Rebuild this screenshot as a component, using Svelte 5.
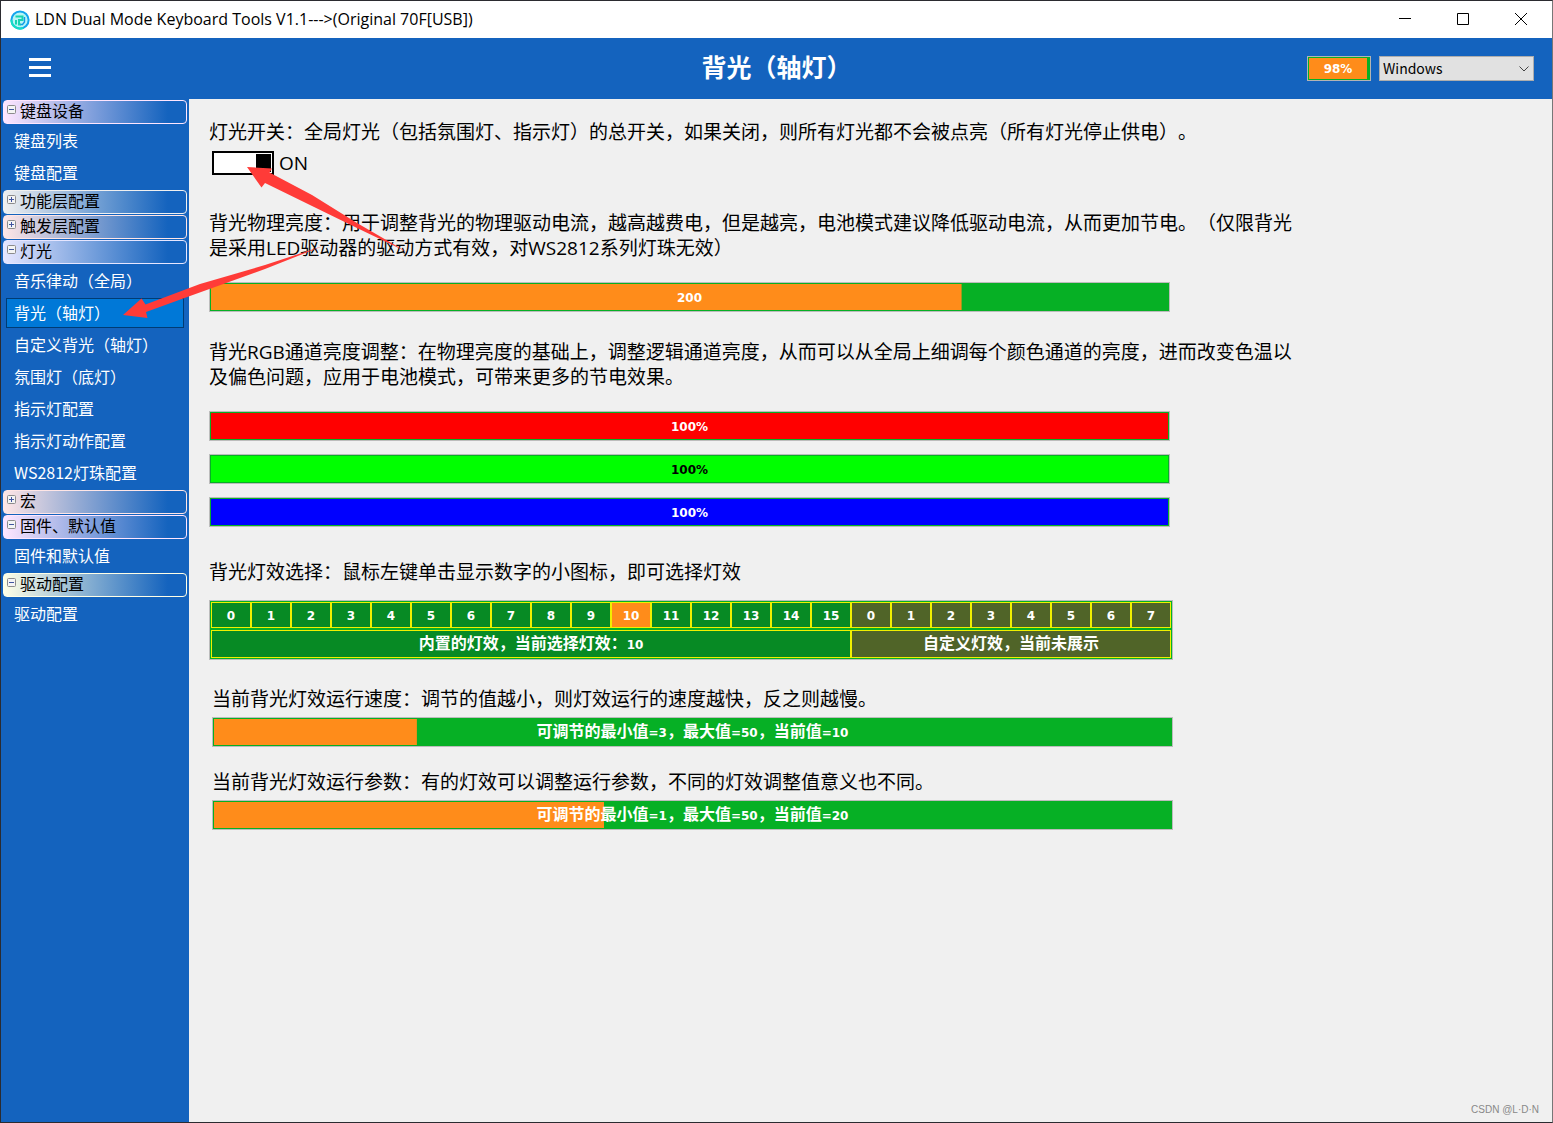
<script lang="ts">
    type Group = { name: string, open: boolean, tint: string, items: string[] }

    let groups: Group[] = $state([
        { name: "键盘设备", open: true, tint: "#ffe6ff", items: ["键盘列表", "键盘配置"] },
        { name: "功能层配置", open: false, tint: "#f0f0f0", items: [] },
        { name: "触发层配置", open: false, tint: "#ffe6e6", items: [] },
        { name: "灯光", open: true, tint: "#e6e6ff", items: [
            "音乐律动（全局）", "背光（轴灯）", "自定义背光（轴灯）", "氛围灯（底灯）",
            "指示灯配置", "指示灯动作配置", "WS2812灯珠配置"
        ] },
        { name: "宏", open: false, tint: "#ffe6e6", items: [] },
        { name: "固件、默认值", open: true, tint: "#ffe6ff", items: ["固件和默认值"] },
        { name: "驱动配置", open: true, tint: "#ffffe6", items: ["驱动配置"] }
    ])
    let page = $state("灯光/背光（轴灯）")
    let lightOn = $state(true)
    let current = $state(200)
    let channels = $state([
        { name: "红色", value: 100, color: "#ff0000", text: "#ffffff" },
        { name: "绿色", value: 100, color: "#00ff00", text: "#000000" },
        { name: "蓝色", value: 100, color: "#0000ff", text: "#ffffff" }
    ])
    let effect = $state(10)
    let speed = $state(10)
    let param = $state(20)

    const builtin = Array.from({ length: 16 }, (_, i) => i)
    const custom = Array.from({ length: 8 }, (_, i) => i)

    // Latin runs are set smaller than the Chinese around them
    const runs = (s: string) => s.match(/[\x20-\x7e]+|[^\x20-\x7e]+/g) ?? []
    const isLatin = (s: string) => /^[\x20-\x7e]/.test(s)
</script>

{#snippet mixed(text: string)}
    <span class="mixed">{#each runs(text) as run}<span class:latin={isLatin(run)}>{run}</span>{/each}</span>
{/snippet}

<div class="window">
    <div class="titlebar">
        <svg class="logo" viewBox="0 0 20 20" width="20" height="20">
            <circle cx="10" cy="10" r="8.6" fill="#b5f5f5" stroke="#12a5ee" stroke-width="2" />
            <path d="M1.4 10a8.6 8.6 0 0 0 12 7.9" fill="none" stroke="#14dfc4" stroke-width="2" />
            <path d="M6 14.500V10M5.500 6.500h7v3.500H9v4.500h2" fill="none" stroke="#16d3b0" stroke-width="2" />
            <path d="M14.500 7v5l-2 2.500h-2" fill="none" stroke="#1499e8" stroke-width="1.400" />
        </svg>
        <span class="caption">LDN Dual Mode Keyboard Tools V1.1---&gt;(Original 70F[USB])</span>
        <div class="window-buttons">
            <button aria-label="最小化"><svg width="12" height="12" viewBox="0 0 12 12"><path d="M0 5.500h12" /></svg></button>
            <button aria-label="最大化"><svg width="12" height="12" viewBox="0 0 12 12"><path d="M.5.5h11v11h-11z" /></svg></button>
            <button aria-label="关闭"><svg width="12" height="12" viewBox="0 0 12 12"><path d="M0 0l12 12M12 0L0 12" /></svg></button>
        </div>
    </div>

    <header>
        <button class="menu" aria-label="菜单">
            <svg width="22" height="19" viewBox="0 0 22 19"><path d="M0 1.500h22M0 9.500h22M0 17.500h22" stroke="#fff" stroke-width="3" /></svg>
        </button>
        <h1>背光（轴灯）</h1>
        <div class="status">
            <div class="battery" role="img" aria-label="电量"><span>98%</span></div>
            <div class="system">
                <select aria-label="系统">
                    <option>Windows</option>
                    <option>Mac</option>
                </select>
                <svg width="10" height="6" viewBox="0 0 10 6"><path d="M.5.5L5 5 9.500.5" fill="none" stroke="#444" /></svg>
            </div>
        </div>
    </header>

    <div class="body">
        <nav>
            {#each groups as group}
                <button class="group" style="--tint: {group.tint}" aria-expanded={group.open} onclick={() => group.open = !group.open}>
                    <svg width="9" height="9" viewBox="0 0 9 9">
                        <rect x=".5" y=".5" width="8" height="8" rx="1" fill="#f4f4f4" stroke="#8c8c8c" />
                        <path d={group.open ? "M2 4.500h5" : "M2 4.500h5M4.500 2v5"} stroke="#4055a0" />
                    </svg>
                    {group.name}
                </button>
                {#if group.open}
                    <div class="items">
                        {#each group.items as item}
                            <button class="item" class:active={page === group.name + "/" + item} onclick={() => page = group.name + "/" + item}>{item}</button>
                        {/each}
                    </div>
                {/if}
            {/each}
        </nav>

        <main>
            <p>灯光开关：全局灯光（包括氛围灯、指示灯）的总开关，如果关闭，则所有灯光都不会被点亮（所有灯光停止供电）。</p>
            <label class="switch">
                <input type="checkbox" bind:checked={lightOn} />
                {lightOn ? "ON" : "OFF"}
            </label>

            <p>背光物理亮度：用于调整背光的物理驱动电流，越高越费电，但是越亮，电池模式建议降低驱动电流，从而更加节电。（仅限背光是采用LED驱动器的驱动方式有效，对WS2812系列灯珠无效）</p>
            <label class="bar physical" style="--fill: {current / 255 * 100}%">
                <input type="range" min="0" max="255" bind:value={current} />
                <span class="value">{@render mixed(`${current}`)}</span>
            </label>

            <p>背光RGB通道亮度调整：在物理亮度的基础上，调整逻辑通道亮度，从而可以从全局上细调每个颜色通道的亮度，进而改变色温以及偏色问题，应用于电池模式，可带来更多的节电效果。</p>
            <div class="channels">
                {#each channels as channel}
                    <label class="bar" style="--fill: {channel.value}%; --color: {channel.color}; --text: {channel.text}">
                        <input type="range" min="0" max="100" aria-label={channel.name} bind:value={channel.value} />
                        <span class="value">{@render mixed(`${channel.value}%`)}</span>
                    </label>
                {/each}
            </div>

            <p>背光灯效选择：鼠标左键单击显示数字的小图标，即可选择灯效</p>
            <div class="effects">
                {#each builtin as n}
                    <button class:chosen={effect === n} onclick={() => effect = n}>{n}</button>
                {/each}
                {#each custom as n}
                    <button class="custom" class:chosen={effect === n + 16} onclick={() => effect = n + 16}>{n}</button>
                {/each}
                <div class="note builtin-note">{@render mixed(`内置的灯效，当前选择灯效：${effect}`)}</div>
                <div class="note custom-note">{@render mixed("自定义灯效，当前未展示")}</div>
            </div>

            <div class="tuning">
                <p>当前背光灯效运行速度：调节的值越小，则灯效运行的速度越快，反之则越慢。</p>
                <label class="bar" style="--fill: {(speed + 0.6) / 50 * 100}%">
                    <input type="range" min="3" max="50" bind:value={speed} />
                    <span class="value">{@render mixed(`可调节的最小值=3，最大值=50，当前值=${speed}`)}</span>
                </label>
                <p>当前背光灯效运行参数：有的灯效可以调整运行参数，不同的灯效调整值意义也不同。</p>
                <label class="bar" style="--fill: {(param + 0.4) / 50 * 100}%">
                    <input type="range" min="1" max="50" bind:value={param} />
                    <span class="value">{@render mixed(`可调节的最小值=1，最大值=50，当前值=${param}`)}</span>
                </label>
            </div>
        </main>
    </div>

    <footer>CSDN @L·D·N</footer>

    <!-- hint arrows drawn over the page -->
    <svg class="arrows" width="420" height="330" viewBox="0 0 420 330">
        <path d="M247 167l25 1.500-2.500 4L312 195l45 28 50 29-50-24-92-45-3.500 4.500z" />
        <path d="M123 315l18.500-16.500 4 6L200 284l65-19 58-19-58 23-75 27-44 16 1.500 6z" />
    </svg>
</div>

<style>
    :global(body) {
        background: #f0f0f0;
    }
    .window {
        position: relative;
        box-sizing: border-box;
        min-height: 100vh;
        display: flex;
        flex-direction: column;
        border: 1px solid #2b2b30;
        border-right-color: #777;
        background: #f0f0f0;
        color: #000;
        font-family: "Open Sans", "Noto Sans CJK SC", sans-serif;
        font-size: 19px;
        text-spacing-trim: space-all;
    }
    button, select {
        font-family: "Noto Sans CJK SC", sans-serif;
        border-radius: 0;
        margin: 0;
        padding: 0;
    }
    p, h1 {
        margin: 0;
    }

    .titlebar {
        display: flex;
        align-items: center;
        height: 37px;
        padding: 0 2px 0 9px;
        background: #fff;
    }
    .caption {
        margin-left: 5px;
        font-size: 16px;
        line-height: 20px;
        padding-bottom: 2px;
    }
    .window-buttons {
        display: flex;
        align-self: stretch;
        margin-left: auto;
    }
    .window-buttons button {
        display: flex;
        align-items: center;
        justify-content: center;
        width: 58px;
        padding-bottom: 2px;
        border: 0;
        background: none;
    }
    .window-buttons path {
        fill: none;
        stroke: #000;
    }

    header {
        display: grid;
        grid-template-columns: 1fr auto 1fr;
        align-items: center;
        height: 61px;
        padding: 0 18px;
        background: #1463be;
    }
    .menu {
        justify-self: start;
        display: flex;
        padding: 0 0 2px 10px;
        border: 0;
        background: none;
    }
    h1 {
        padding-bottom: 4px;
        color: #fff;
        font-size: 25px;
        font-weight: 700;
        line-height: 56px;
    }
    .status {
        justify-self: end;
        display: flex;
        gap: 8px;
    }
    .battery {
        box-sizing: border-box;
        width: 64px;
        height: 25px;
        border: 1px solid #b4b4b4;
        padding: 1px 3px 1px 1px;
        background: #06b025;
    }
    .battery span {
        display: block;
        box-sizing: border-box;
        height: 21px;
        padding-top: 1px;
        background: #ff8c1a;
        color: #fff;
        font: bold 12px/20px "DejaVu Sans", sans-serif;
        text-align: center;
    }
    .system {
        display: grid;
        align-items: center;
    }
    .system select, .system svg {
        grid-area: 1 / 1;
    }
    .system svg {
        justify-self: end;
        margin-right: 5px;
        pointer-events: none;
    }
    select {
        appearance: none;
        box-sizing: border-box;
        width: 155px;
        height: 25px;
        padding: 0 0 2px 3px;
        border: 1px solid #adadad;
        background: #e1e1e1;
        color: #000;
        font-size: 14px;
    }

    .body {
        flex: 1;
        display: flex;
    }
    nav {
        flex: none;
        box-sizing: border-box;
        width: 188px;
        padding: 1px 2px;
        background: #1463be;
    }
    .group {
        display: flex;
        gap: 4px;
        box-sizing: border-box;
        width: 100%;
        height: 24px;
        margin-bottom: 1px;
        padding: 2px 3px;
        border: 1px solid var(--tint);
        border-radius: 4px;
        background: linear-gradient(90deg, var(--tint), #1463be 90%);
        color: #000;
        font-size: 16px;
        line-height: 14px;
    }
    .group svg {
        margin-top: 2px;
    }
    .items {
        display: flex;
        flex-direction: column;
        gap: 2px;
        padding: 1px 3px 2px;
    }
    .item {
        height: 30px;
        padding: 0 0 2px 7px;
        border: 1px solid transparent;
        background: none;
        color: #fff;
        font-size: 16px;
        line-height: 26px;
        text-align: left;
    }
    .item.active {
        border-color: #003c74;
        background: #0078d7;
    }

    main {
        flex: 1;
        max-width: 1092px;
        padding: 21px 20px;
    }
    main p {
        line-height: 25px;
    }
    .switch {
        display: flex;
        align-items: center;
        gap: 5px;
        width: fit-content;
        margin: 4px 0 34px 3px;
        line-height: 28px;
    }
    .switch input {
        appearance: none;
        box-sizing: border-box;
        display: flex;
        width: 62px;
        height: 24px;
        margin: 0;
        padding: 1px;
        border: 2px solid #000;
        background: #fff;
    }
    .switch input::before {
        content: "";
        width: 15px;
        background: #000;
    }
    .switch input:checked::before {
        margin-left: auto;
    }

    .bar {
        display: grid;
        box-sizing: border-box;
        max-width: 961px;
        height: 30px;
        border: 1px solid #bcbcbc;
        padding: 1px;
        background: #06b025;
    }
    .bar input, .value {
        grid-area: 1 / 1;
    }
    .bar input {
        appearance: none;
        width: 100%;
        height: 26px;
        margin: 0;
        background: linear-gradient(var(--color, #ff8c1a), var(--color, #ff8c1a)) no-repeat 0 0 / var(--fill) 100%;
    }
    .bar input::-webkit-slider-thumb {
        appearance: none;
        width: 1px;
        height: 26px;
    }
    .value, .note {
        display: flex;
        align-items: center;
        justify-content: center;
        color: var(--text, #fff);
        font: bold 16px/22px "Noto Sans CJK SC", sans-serif;
        pointer-events: none;
    }
    .mixed {
        padding-bottom: 4px;
    }
    .latin {
        font: bold 12px/12px "DejaVu Sans", sans-serif;
    }
    .physical {
        margin: 21px 0 28px;
    }
    .channels {
        display: grid;
        gap: 13px;
        margin: 21px 0 33px;
    }

    .effects {
        display: grid;
        grid-template-columns: repeat(24, 1fr);
        box-sizing: border-box;
        max-width: 964px;
        margin: 15px 0 27px;
        row-gap: 2px;
        border: 1px solid #bcbcbc;
        padding: 1px;
        background: #06b025;
    }
    .effects button {
        height: 26px;
        padding-top: 2px;
        border: 1px solid #f0f000;
        background: #078a24;
        color: #fff;
        font: bold 12px "DejaVu Sans", sans-serif;
    }
    .note {
        box-sizing: border-box;
        height: 28px;
        border: 1px solid #f0f000;
        background: #078a24;
    }
    .builtin-note {
        grid-column: span 16;
    }
    .custom-note {
        grid-column: span 8;
    }
    .effects .custom, .custom-note {
        background: #506428;
    }
    .effects .chosen {
        background: #ff8c1a;
    }

    .tuning {
        padding-left: 3px;
    }
    .tuning .bar {
        margin: 5px 0 23px;
    }

    footer {
        position: absolute;
        right: 13px;
        bottom: 7px;
        color: #888;
        font: 10px "Liberation Sans", sans-serif;
    }
    .arrows {
        position: absolute;
        top: -1px;
        left: -1px;
        fill: #ff3b38;
        pointer-events: none;
    }
</style>
